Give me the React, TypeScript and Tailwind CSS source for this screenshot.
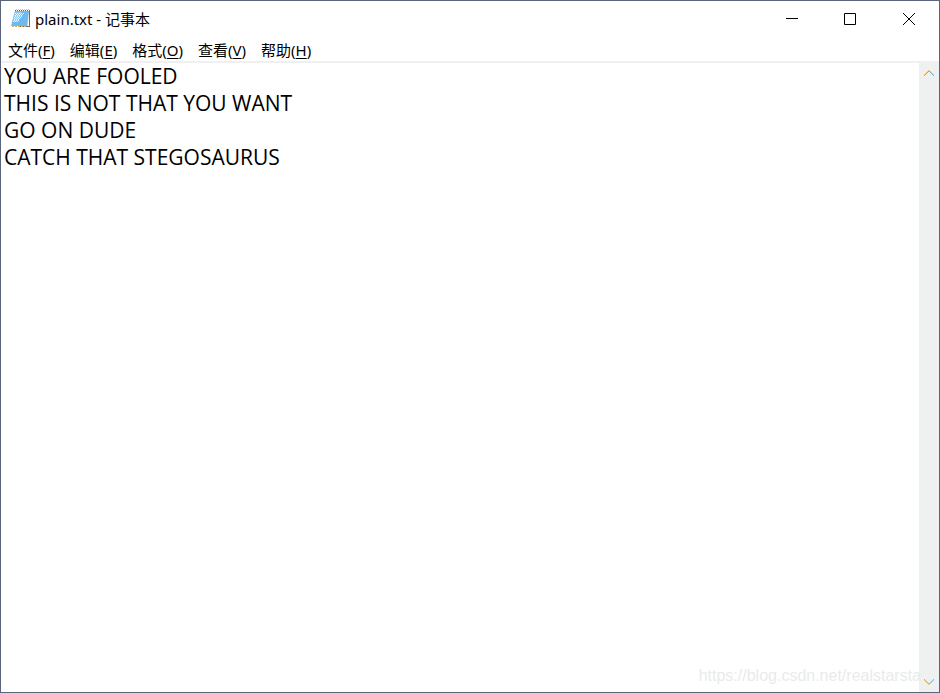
import { useState } from "react";

const MENUS = [
  { label: "文件", key: "F" },
  { label: "编辑", key: "E" },
  { label: "格式", key: "O" },
  { label: "查看", key: "V" },
  { label: "帮助", key: "H" },
];

const TEXT = [
  "YOU ARE FOOLED",
  "THIS IS NOT THAT YOU WANT",
  "GO ON DUDE",
  "CATCH THAT STEGOSAURUS",
].join("\n");

function NotepadIcon() {
  return (
    <svg className="h-5 w-5" viewBox="0 0 20 20" aria-hidden="true">
      <path d="M18 1h1v17H8v-1h10z" fill="#7d6a55" />
      <path d="M16 2h2l-1 15H7z" fill="#e8dfc8" />
      <path d="M4 2h14l-2 15H0z" fill="#6cbaf0" />
      <path d="M4 3h7L7 13H1z" fill="#8fcbf5" />
      <path d="M4 4.500h9M4 6.500h8M3 8.500h8M3 10.500h6M2 12.500h5" stroke="#e8f7ff" strokeDasharray="1 1" />
      <path d="M5 5.500h7M4 7.500h8M4 9.500h6M3 11.500h5" stroke="#d5effd" strokeDasharray="1 1" />
      <path d="M4 1.500h14" stroke="#51687e" strokeDasharray="1 1" />
      <path d="M5 .5h13" stroke="#b9c3c9" strokeDasharray="1 1" />
      <path d="M1 17.500h15" stroke="#d9b56c" strokeDasharray="2 1" />
    </svg>
  );
}

function ScrollArrow({ down = false }: { down?: boolean }) {
  return (
    <svg className="h-2 w-[10px]" viewBox="0 0 10 8" fill="none" shapeRendering="crispEdges" aria-hidden="true">
      {down ? (
        <>
          <path d="M0 3h1v1h1v1h1v1h1v1h2V6h1V5h1V4h1V3h1v1H9v1H8v1H7v1H6v1H4V7H3V6H2V5H1V4H0z" fill="#f6cf78" />
          <path d="M0 2h1v1h1v1h1v1h1v1h2V5h1V4h1V3h1V2h1v1H9v1H8v1H7v1H6v1H4V6H3V5H2V4H1V3H0z" fill="#7fc0e6" />
        </>
      ) : (
        <>
          <path d="M0 5V4h1V3h1V2h1V1h1V0h2v1h1v1h1v1h1v1h1v1H9V4H8V3H7V2H6V1H4v1H3v1H2v1H1v1z" fill="#f9cb70" />
          <path d="M0 6V5h1V4h1V3h1V2h1V1h2v1h1v1h1v1h1v1h1v1H9V5H8V4H7V3H6V2H4v1H3v1H2v1H1v1z" fill="#7cb6d4" />
        </>
      )}
    </svg>
  );
}

export default function App() {
  const [text, setText] = useState(TEXT);

  return (
    <div className="relative flex h-screen flex-col overflow-hidden border border-[#5b647a] bg-white font-['Noto_Sans','Noto_Sans_CJK_SC',sans-serif] text-black">
      <header className="flex h-9 shrink-0 items-center justify-between pl-[10px]">
        <div className="flex items-center gap-1">
          <NotepadIcon />
          <h1 className="text-[15px] leading-5">plain.txt - 记事本</h1>
        </div>
        <div className="flex h-full">
          <button type="button" aria-label="最小化" className="flex w-[58px] items-center justify-center">
            <svg className="h-3 w-3" viewBox="0 0 12 12" aria-hidden="true">
              <path d="M0 5.500h12" stroke="#000" />
            </svg>
          </button>
          <button type="button" aria-label="最大化" className="flex w-[58px] items-center justify-center">
            <svg className="h-3 w-3" viewBox="0 0 12 12" fill="none" aria-hidden="true">
              <path d="M.5.5h11v11H.5z" stroke="#000" />
            </svg>
          </button>
          <button type="button" aria-label="关闭" className="flex w-[60px] items-center justify-center">
            <svg className="h-3 w-3" viewBox="0 0 12 12" fill="none" aria-hidden="true">
              <path d="M0 0l12 12M12 0L0 12" stroke="#000" />
            </svg>
          </button>
        </div>
      </header>

      <nav className="flex h-6 shrink-0 items-end gap-[15px] px-[7px] text-[15px] leading-[22px]">
        {MENUS.map((m) => (
          <button key={m.key} type="button">
            {m.label}(<span className="underline underline-offset-2 [text-decoration-skip-ink:none]">{m.key}</span>)
          </button>
        ))}
      </nav>

      <main className="flex min-h-0 grow border-t-2 border-[#f0f0f0]">
        <textarea
          aria-label="文本编辑器"
          spellCheck={false}
          value={text}
          onChange={(e) => setText(e.target.value)}
          className="min-w-0 grow resize-none overflow-hidden pl-[3px] font-['Open_Sans','Noto_Sans_CJK_SC',sans-serif] text-[21px] leading-[27px] outline-none"
        />
        <div className="flex w-5 shrink-0 flex-col justify-between bg-[#eff0f0]">
          <button type="button" aria-label="向上滚动" className="flex h-[22px] items-center justify-center">
            <ScrollArrow />
          </button>
          <button type="button" aria-label="向下滚动" className="flex h-[22px] items-center justify-center">
            <ScrollArrow down />
          </button>
        </div>
      </main>

      <p className="pointer-events-none absolute right-[18px] bottom-1 font-['Liberation_Sans',Arial,sans-serif] text-[16px] leading-6 text-[#e9ebeb]">
        https://blog.csdn.net/realstarsta
      </p>
    </div>
  );
}
